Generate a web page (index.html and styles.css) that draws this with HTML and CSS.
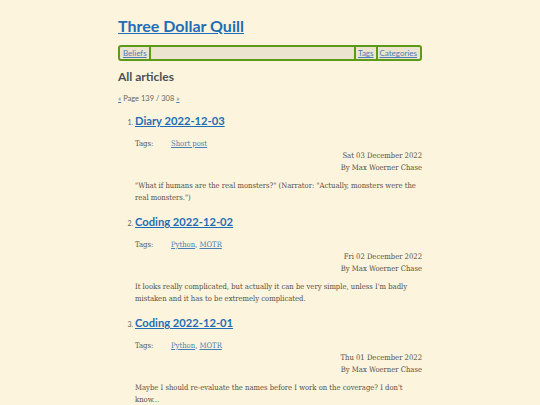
FILE: index.html
```html
<!DOCTYPE html>
<html>
<head>
<meta charset="utf-8">
<link rel="stylesheet" href="styles.css">
</head>
<body>
<div class="page">
  <h1 class="site-title"><a href="#">Three Dollar Quill</a></h1>
  <nav class="nav">
    <a href="#" class="nav-link">Beliefs</a>
    <span class="nav-fill"></span>
    <a href="#" class="nav-link">Tags</a>
    <a href="#" class="nav-link">Categories</a>
  </nav>
  <h2 class="section-title">All articles</h2>
  <p class="pager"><a href="#">«</a> Page 139 / 308 <a href="#">»</a></p>
  <ol class="articles">
    <li class="article">
      <h3 class="article-title"><a href="#">Diary 2022-12-03</a></h3>
      <div class="tags"><span class="tags-label">Tags:</span><span class="tags-list"><a href="#">Short post</a></span></div>
      <div class="meta">Sat 03 December 2022<br>By Max Woerner Chase</div>
      <p class="summary">"What if humans are the real monsters?" (Narrator: "Actually, monsters were the real monsters.")</p>
    </li>
    <li class="article">
      <h3 class="article-title"><a href="#">Coding 2022-12-02</a></h3>
      <div class="tags"><span class="tags-label">Tags:</span><span class="tags-list"><a href="#">Python</a>, <a href="#">MOTR</a></span></div>
      <div class="meta">Fri 02 December 2022<br>By Max Woerner Chase</div>
      <p class="summary">It looks really complicated, but actually it can be very simple, unless I'm badly mistaken and it has to be extremely complicated.</p>
    </li>
    <li class="article">
      <h3 class="article-title"><a href="#">Coding 2022-12-01</a></h3>
      <div class="tags"><span class="tags-label">Tags:</span><span class="tags-list"><a href="#">Python</a>, <a href="#">MOTR</a></span></div>
      <div class="meta">Thu 01 December 2022<br>By Max Woerner Chase</div>
      <p class="summary">Maybe I should re-evaluate the names before I work on the coverage? I don't know...</p>
    </li>
  </ol>
</div>
</body>
</html>
```
FILE: styles.css
```css
html, body {
  margin: 0;
  padding: 0;
  background: #fcf4dc;
}
body {
  font-family: "DejaVu Serif", serif;
  color: #555048;
}
.page {
  width: 304px;
  margin: 0 auto;
  padding-top: 14px;
}
a {
  color: #1f6db5;
}
.site-title {
  margin: 0;
  font-family: Lato, sans-serif;
  font-size: 16px;
  font-weight: 700;
  line-height: 24px;
}
.site-title a {
  color: #1f6db5;
}
.nav {
  margin-top: 7px;
  display: flex;
  align-items: stretch;
  border: 2px solid #5e9a1a;
  border-radius: 3px;
  background: #ece4cf;
  height: 12px;
  padding: 0 1px;
  font-family: Lato, sans-serif;
  font-size: 8px;
  line-height: 12px;
}
.nav-link {
  color: #4a7fb5;
  padding: 0 2px;
  border-right: 2px solid #5e9a1a;
}
.nav-link:last-child {
  border-right: none;
}
.nav-fill {
  flex: 1;
  border-right: 2px solid #5e9a1a;
}
.section-title {
  margin: 8px 0 0;
  font-family: Lato, sans-serif;
  font-size: 12px;
  font-weight: 700;
  color: #4a5256;
  line-height: 16px;
}
.pager {
  margin: 9px 0 0;
  font-family: Lato, sans-serif;
  font-size: 7.5px;
  color: #666;
  line-height: 10px;
}
.pager a {
  color: #4a7fb5;
}
.articles {
  margin: 9px 0 0;
  padding-left: 17px;
  font-family: Lato, sans-serif;
  font-size: 7px;
  color: #666;
}
.article {
  padding-bottom: 2px;
}
.article-title {
  margin: 0;
  font-family: Lato, sans-serif;
  font-size: 11.2px;
  font-weight: 700;
  line-height: 16px;
  display: inline;
}
.article-title a {
  color: #1f6db5;
}
.tags, .meta, .summary {
  font-family: "DejaVu Serif Condensed", "DejaVu Serif", serif;
  font-size: 7.6px;
  color: #555048;
}
.tags {
  margin-top: 9px;
  display: flex;
  line-height: 12px;
}
.tags-label {
  width: 36px;
}
.tags-list a {
  color: #4a7fb5;
}
.meta {
  text-align: right;
  line-height: 12px;
}
.summary {
  margin: 6px 0 8px;
  line-height: 12px;
}
```
